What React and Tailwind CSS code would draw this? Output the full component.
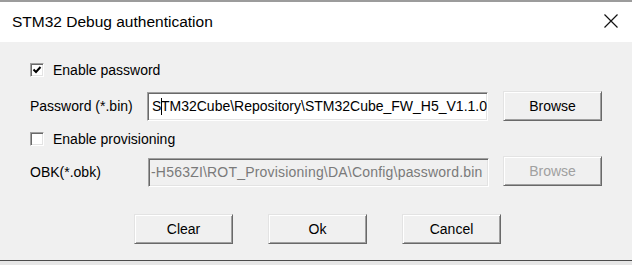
const font = { fontFamily: '"Liberation Sans", Arial, sans-serif' }

function Button({ children, disabled }) {
  return (
    <button
      className={`flex h-[30px] w-[99px] shrink-0 items-center justify-center border border-t-[#e3e3e3] border-l-[#e3e3e3] border-b-[#696969] border-r-[#696969] bg-[#f0f0f0] text-[14px] shadow-[inset_1px_1px_0_#ffffff,inset_-1px_-1px_0_#a0a0a0] ${disabled ? "text-[#a0a0a0]" : "text-black"}`}
    >
      {children}
    </button>
  )
}

function CheckBox({ checked, label }) {
  return (
    <div className="flex h-[14px] items-center gap-[9px]">
      <div className="flex h-[14px] w-[14px] items-center justify-center border border-t-[#a0a0a0] border-l-[#a0a0a0] border-b-white border-r-white bg-white shadow-[inset_1px_1px_0_#696969,inset_-1px_-1px_0_#e3e3e3]">
        {checked && (
          <svg width="10" height="10" viewBox="0 0 10 10">
            <path d="M1.5 4.5 L4 7 L8.5 2" fill="none" stroke="#000" strokeWidth="2" />
          </svg>
        )}
      </div>
      <span className="text-[14px] text-black">{label}</span>
    </div>
  )
}

function Field({ children, disabled }) {
  return (
    <div
      className={`flex h-[29px] w-[341px] items-center overflow-hidden whitespace-nowrap border border-t-[#a0a0a0] border-l-[#a0a0a0] border-b-white border-r-white text-[14px] shadow-[inset_1px_1px_0_#696969,inset_-1px_-1px_0_#e3e3e3] ${disabled ? "bg-[#f0f0f0] pl-[2px] tracking-[0.2px] text-[#7a7a7a]" : "bg-white pl-[4px] text-black"}`}
    >
      {children}
    </div>
  )
}

export default function App() {
  return (
    <div className="flex h-[265px] w-[632px] flex-col overflow-hidden bg-white" style={font}>
      <div className="h-[2px] bg-[#9c9c9c]" />

      {/* title bar */}
      <div className="flex h-[40px] items-center justify-between bg-white pl-[12px] pr-[14px]">
        <span className="text-[15.5px] text-black">STM32 Debug authentication</span>
        <svg width="14" height="14" viewBox="0 0 14 14" className="-mt-[3px]">
          <path d="M0.5 0.5 L13.5 13.5 M13.5 0.5 L0.5 13.5" stroke="#111" strokeWidth="1.2" />
        </svg>
      </div>

      {/* body */}
      <div className="flex h-[218px] flex-col bg-[#f0f0f0] pl-[30px] pt-[21px]">
        <CheckBox checked label="Enable password" />

        <div className="mt-[14px] flex items-center">
          <span className="w-[117px] text-[14px] text-black">Password (*.bin)</span>
          <Field>
            S<span className="mx-[-0.5px] inline-block h-[17px] w-px bg-black" />TM32Cube\Repository\STM32Cube_FW_H5_V1.1.0
          </Field>
          <div className="ml-[15px]">
            <Button>Browse</Button>
          </div>
        </div>

        <div className="mt-[11px]">
          <CheckBox label="Enable provisioning" />
        </div>

        <div className="mt-[12px] flex items-center">
          <span className="w-[118px] text-[14px] text-black">OBK(*.obk)</span>
          <Field disabled>-H563ZI\ROT_Provisioning\DA\Config\password.bin</Field>
          <div className="ml-[14px] -mt-[3px]">
            <Button disabled>Browse</Button>
          </div>
        </div>

        <div className="mt-[27px] flex gap-[35px] pl-[104px]">
          <Button>Clear</Button>
          <Button>Ok</Button>
          <Button>Cancel</Button>
        </div>
      </div>

      <div className="h-px bg-[#4a4a4a]" />
      <div className="flex-1 bg-[#e6e6e6]" />
    </div>
  )
}
